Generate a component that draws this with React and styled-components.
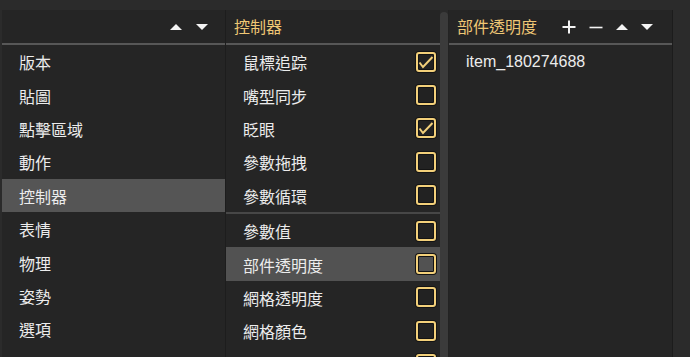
import React from "react";
import styled, { createGlobalStyle } from "styled-components";

const Global = createGlobalStyle`
  html, body { margin: 0; padding: 0; background: #2b2b2b; }
  body {
    font-family: "Noto Sans CJK TC", "Noto Sans", sans-serif;
    color: #ececec;
    overflow: hidden;
  }
`;

const Page = styled.div`
  width: 690px;
  height: 357px;
  padding: 10px 0 0 2px;
  box-sizing: border-box;
  display: flex;
`;

const Frame = styled.div`
  display: flex;
  height: 347px;
  background: #252525;
  border-right: 1px solid #1c1c1c;
  overflow: hidden;
`;

const Column = styled.div`
  width: ${(p) => p.w}px;
  display: flex;
  flex-direction: column;
  border-right: ${(p) => (p.divider ? "1px solid #1d1d1d" : "none")};
  overflow: hidden;
`;

const Header = styled.div`
  height: 33px;
  flex: none;
  display: flex;
  align-items: center;
  padding: 0 ${(p) => p.pr || 0}px 0 ${(p) => p.pl || 0}px;
  border-bottom: 2px solid #575757;
  gap: ${(p) => p.gap || 0}px;
`;

const HeaderTitle = styled.div`
  color: #efc775;
  font-size: 16px;
  line-height: 1;
  flex: 1;
  padding-bottom: 1px;
`;

const Spacer = styled.div`
  flex: 1;
`;

const Tri = styled.div`
  width: 0;
  height: 0;
  border-left: 6px solid transparent;
  border-right: 6px solid transparent;
  ${(p) =>
    p.up
      ? "border-bottom: 6px solid #f4f4f4;"
      : "border-top: 6px solid #f4f4f4;"}
  margin-top: 1px;
`;

const IconBox = styled.div`
  width: 14px;
  height: 14px;
  display: flex;
  align-items: center;
  justify-content: center;
`;

const Row = styled.div`
  height: 33.4px;
  flex: none;
  display: flex;
  align-items: center;
  padding: 0 4px 0 ${(p) => p.pl}px;
  background: ${(p) => (p.selected ? p.selBg || "#555555" : "transparent")};
  font-size: 16px;
  color: #ececec;
  box-sizing: border-box;
`;

const RowText = styled.span`
  flex: 1;
  line-height: 1;
  padding-top: 1px;
  font-family: ${(p) =>
    p.latin ? '"Liberation Sans", Arial, sans-serif' : "inherit"};
  font-size: ${(p) => (p.latin ? "16px" : "inherit")};
`;

const Separator = styled.div`
  height: 2px;
  flex: none;
  background: #474747;
`;

const Check = styled.div`
  width: 20px;
  height: 20px;
  box-sizing: border-box;
  border: 2px solid #f3d07a;
  border-radius: 3px;
  background: ${(p) => (p.inSel ? "#525252" : "#222")};
  box-shadow: 0 0 0 1px #141414, inset 0 0 0 1px #141414;
  display: flex;
  align-items: center;
  justify-content: center;
`;

const Scroll = styled.div`
  width: 8px;
  flex: none;
  display: flex;
  flex-direction: column;
  background: #2a2a2a;
  border-right: 1px solid #232323;
`;

const Thumb = styled.div`
  flex: 1;
  margin-top: 2px;
  background: #3b3b3b;
  border-radius: 4px 4px 0 0;
`;

const CheckBox = ({ checked, inSel }) => (
  <Check inSel={inSel}>
    {checked && (
      <svg width="16" height="16" viewBox="0 0 16 16">
        <polyline
          points="1.5,8.5 5,13 14.5,3"
          fill="none"
          stroke="#f3d07a"
          strokeWidth="2"
          strokeLinejoin="miter"
        />
      </svg>
    )}
  </Check>
);

const left = ["版本", "貼圖", "點擊區域", "動作", "控制器", "表情", "物理", "姿勢", "選項"];
const ctrlA = [
  ["鼠標追踪", true],
  ["嘴型同步", false],
  ["眨眼", true],
  ["參數拖拽", false],
  ["參數循環", false],
];
const ctrlB = [
  ["參數值", false],
  ["部件透明度", false, true],
  ["網格透明度", false],
  ["網格顏色", false],
  ["自動呼吸", false],
];

export default function App() {
  return (
    <>
      <Global />
      <Page>
        <Frame>
          <Column w={223} divider>
            <Header pr={17} gap={14}>
              <Spacer />
              <Tri up />
              <Tri />
            </Header>
            {left.map((t) => (
              <Row key={t} pl={17} selected={t === "控制器"}>
                <RowText>{t}</RowText>
              </Row>
            ))}
          </Column>
          <Column w={214}>
            <Header pl={8}>
              <HeaderTitle>控制器</HeaderTitle>
            </Header>
            {ctrlA.map(([t, c]) => (
              <Row key={t} pl={17}>
                <RowText>{t}</RowText>
                <CheckBox checked={c} />
              </Row>
            ))}
            <Separator />
            {ctrlB.map(([t, c, s]) => (
              <Row key={t} pl={17} selected={s} selBg="#525252">
                <RowText>{t}</RowText>
                <CheckBox checked={c} inSel={s} />
              </Row>
            ))}
          </Column>
          <Scroll>
            <Thumb />
          </Scroll>
          <Column w={223}>
            <Header pl={8} pr={19} gap={13}>
              <HeaderTitle>部件透明度</HeaderTitle>
              <IconBox>
                <svg width="14" height="14" viewBox="0 0 14 14">
                  <path d="M7 0.5V13.5M0.5 7H13.5" stroke="#f4f4f4" strokeWidth="2" />
                </svg>
              </IconBox>
              <IconBox>
                <svg width="14" height="14" viewBox="0 0 14 14">
                  <path d="M0.5 7.5H13.5" stroke="#f4f4f4" strokeWidth="1.6" />
                </svg>
              </IconBox>
              <Tri up />
              <Tri />
            </Header>
            <Row pl={17}>
              <RowText latin>item_180274688</RowText>
            </Row>
          </Column>
        </Frame>
      </Page>
    </>
  );
}
